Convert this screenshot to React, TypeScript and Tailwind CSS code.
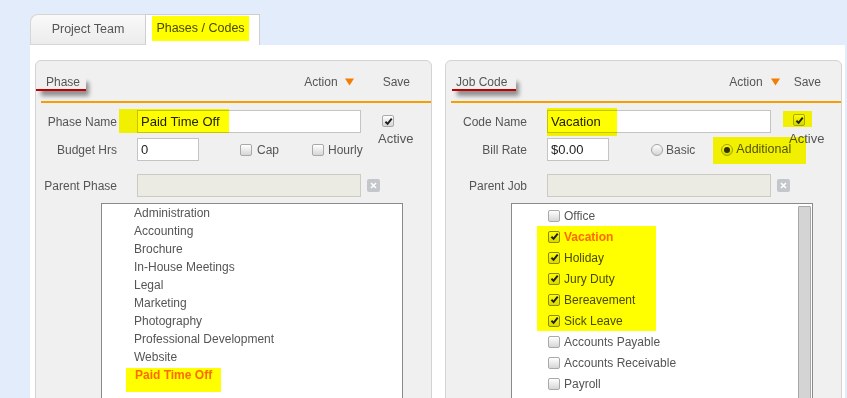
import React from "react";

function Box({ checked, hl }: { checked?: boolean; hl?: boolean }) {
  return (
    <span
      className={
        hl
          ? "inline-flex h-[12px] w-[12px] shrink-0 items-center justify-center rounded-[2px] border border-[#8a8a00] bg-gradient-to-b from-[#ffff00] to-[#d8d800]"
          : "inline-flex h-[12px] w-[12px] shrink-0 items-center justify-center rounded-[2px] border border-[#a9a9a9] bg-gradient-to-b from-white to-[#d6d6d6]"
      }
    >
      {checked && (
        <svg viewBox="0 0 10 10" className="h-[9px] w-[9px]">
          <path d="M1.6 5.3 L4 7.7 L8.6 1.9" stroke="#1e1e1e" strokeWidth="2.1" fill="none" />
        </svg>
      )}
    </span>
  );
}

function Radio({ checked }: { checked?: boolean }) {
  return (
    <span className="inline-flex h-[12px] w-[12px] shrink-0 items-center justify-center rounded-full border border-[#a3a3a3] bg-gradient-to-b from-white to-[#d4d4d4]">
      {checked && <span className="h-[6px] w-[6px] rounded-full bg-[#333]" />}
    </span>
  );
}

function Triangle() {
  return (
    <svg width="9" height="8" viewBox="0 0 9 8">
      <path d="M0 0.5 H9 L4.5 7.5 Z" fill="#f47c00" />
    </svg>
  );
}

function XBtn() {
  return (
    <span className="ml-[6px] inline-flex h-[13px] w-[13px] shrink-0 items-center justify-center rounded-[2px] bg-[#c3c7cb]">
      <svg width="7" height="7" viewBox="0 0 7 7">
        <path d="M1 1 L6 6 M6 1 L1 6" stroke="white" strokeWidth="1.6" />
      </svg>
    </span>
  );
}

function Label({ children }: { children: React.ReactNode }) {
  return (
    <span className="w-[81px] shrink-0 whitespace-nowrap text-right text-[12px] leading-[14px] text-[#555]">
      {children}
    </span>
  );
}

const inputCls =
  "ml-[20px] flex h-[23px] shrink-0 items-center border border-[#c4c4c4] bg-white pl-[3px] text-[13px] leading-[16px] text-[#222]";

const phases = [
  "Administration",
  "Accounting",
  "Brochure",
  "In-House Meetings",
  "Legal",
  "Marketing",
  "Photography",
  "Professional Development",
  "Website",
];

function LeftPanel() {
  return (
    <div className="h-[360px] w-[397px] shrink-0 rounded-t-[6px] border border-[#d3d3d3] bg-[#f0f0f0]">
      <div className="flex h-[40px] items-start">
        <span className="mt-[14px] border-b-2 border-[#c00000] pl-[10px] pr-[6px] text-[12px] leading-[14px] text-[#555] shadow-[4px_6px_4px_-1px_rgba(0,0,0,0.4)]">
          Phase
        </span>
        <div className="ml-auto mr-[21px] mt-[14px] flex items-center text-[12px] leading-[14px] text-[#555]">
          <span>Action</span>
          <span className="ml-[7px]"><Triangle /></span>
          <span className="ml-[29px]">Save</span>
        </div>
      </div>
      <div className="ml-[5px] h-[2px] bg-[#f5a000]" />

      <div className="mt-[7px] flex">
        <div className="w-[325px] shrink-0">
          <div className="relative flex h-[23px] items-center">
            <Label>Phase Name</Label>
            <div className={`${inputCls} w-[224px]`}>Paid Time Off</div>
            <div className="pointer-events-none absolute left-[83px] top-[-1px] h-[24px] w-[110px] bg-[#ffff00] mix-blend-multiply" />
          </div>
          <div className="mt-[5px] flex h-[23px] items-center whitespace-nowrap">
            <Label>Budget Hrs</Label>
            <div className={`${inputCls} w-[62px]`}>0</div>
            <span className="ml-[41px] flex shrink-0"><Box /></span>
            <span className="ml-[5px] shrink-0 text-[12px] text-[#555]">Cap</span>
            <span className="ml-[33px] flex shrink-0"><Box /></span>
            <span className="ml-[4px] shrink-0 text-[12px] text-[#555]">Hourly</span>
          </div>
        </div>
        <div className="ml-[17px] flex flex-col">
          <span className="ml-[4px] mt-[5px] flex"><Box checked /></span>
          <span className="mt-[4px] text-[13px] leading-[16px] text-[#555]">Active</span>
        </div>
      </div>

      <div className="mt-[13px] flex h-[23px] items-center">
        <Label>Parent Phase</Label>
        <div className="ml-[20px] h-[23px] w-[224px] shrink-0 border border-[#cbcbc4] bg-[#ebebe4]" />
        <XBtn />
      </div>

      <div className="ml-[65px] mt-[6px] h-[200px] w-[302px] border border-[#8a8a8a] bg-white">
        {phases.map((p) => (
          <div key={p} className="h-[18px] pl-[32px] text-[12px] leading-[18px] text-[#555]">
            {p}
          </div>
        ))}
        <div className="ml-[24px] mt-[2px] h-[24px] w-[95px] bg-[#ffff00] pl-[9px] text-[12px] font-bold leading-[14px] text-[#ff6a00]">
          Paid Time Off
        </div>
      </div>
    </div>
  );
}

const codesTop = ["Office"];
const codesHl = ["Vacation", "Holiday", "Jury Duty", "Bereavement", "Sick Leave"];
const codesBottom = ["Accounts Payable", "Accounts Receivable", "Payroll"];

function RightPanel() {
  return (
    <div className="h-[360px] w-[397px] shrink-0 rounded-t-[6px] border border-[#d3d3d3] bg-[#f0f0f0]">
      <div className="flex h-[40px] items-start">
        <span className="ml-[6px] mt-[14px] border-b-2 border-[#c00000] pl-[4px] pr-[9px] text-[12px] leading-[14px] text-[#555] shadow-[4px_6px_4px_-1px_rgba(0,0,0,0.4)]">
          Job Code
        </span>
        <div className="ml-auto mr-[20px] mt-[14px] flex items-center text-[12px] leading-[14px] text-[#555]">
          <span>Action</span>
          <span className="ml-[8px]"><Triangle /></span>
          <span className="ml-[14px]">Save</span>
        </div>
      </div>
      <div className="ml-[5px] h-[2px] bg-[#f5a000]" />

      <div className="mt-[7px] flex">
        <div className="w-[325px] shrink-0">
          <div className="relative flex h-[23px] items-center">
            <Label>Code Name</Label>
            <div className={`${inputCls} w-[224px]`}>Vacation</div>
            <div className="pointer-events-none absolute left-[101px] top-[-2px] h-[28px] w-[70px] bg-[#ffff00] mix-blend-multiply" />
          </div>
          <div className="relative mt-[5px] flex h-[23px] items-center whitespace-nowrap">
            <Label>Bill Rate</Label>
            <div className={`${inputCls} w-[62px]`}>$0.00</div>
            <span className="ml-[42px] flex shrink-0"><Radio /></span>
            <span className="ml-[3px] shrink-0 text-[12px] text-[#555]">Basic</span>
            <span className="ml-[26px] flex shrink-0"><Radio checked /></span>
            <span className="ml-[3px] shrink-0 text-[12.5px] text-[#555]">Additional</span>
            <div className="pointer-events-none absolute left-[267px] top-[-1px] h-[27px] w-[93px] bg-[#ffff00] mix-blend-multiply" />
          </div>
        </div>
        <div className="ml-[18px] flex flex-col">
          <span className="relative ml-[4px] mt-[4px] flex">
            <Box checked />
            <span className="pointer-events-none absolute left-[-10px] top-[-3px] h-[16px] w-[29px] bg-[#ffff00] mix-blend-multiply" />
          </span>
          <span className="mt-[5px] text-[13px] leading-[16px] text-[#555]">Active</span>
        </div>
      </div>

      <div className="mt-[13px] flex h-[23px] items-center">
        <Label>Parent Job</Label>
        <div className="ml-[20px] h-[23px] w-[224px] shrink-0 border border-[#cbcbc4] bg-[#ebebe4]" />
        <XBtn />
      </div>

      <div className="ml-[65px] mt-[6px] flex h-[200px] w-[302px] border border-[#8a8a8a] bg-white">
        <div className="flex-1 pt-[1px]">
          {codesTop.map((c) => (
            <div key={c} className="flex h-[21px] items-center pl-[36px] text-[12px] text-[#555]">
              <Box />
              <span className="ml-[4px]">{c}</span>
            </div>
          ))}
          <div className="ml-[25px] w-[119px] bg-[#ffff00]">
            {codesHl.map((c, i) => (
              <div key={c} className="flex h-[21px] items-center pl-[11px] text-[12px]">
                <Box checked hl />
                <span className={i === 0 ? "ml-[4px] font-bold text-[#ff6a00]" : "ml-[4px] text-[#4a4a00]"}>{c}</span>
              </div>
            ))}
          </div>
          {codesBottom.map((c) => (
            <div key={c} className="flex h-[21px] items-center pl-[36px] text-[12px] text-[#555]">
              <Box />
              <span className="ml-[4px]">{c}</span>
            </div>
          ))}
          <div className="flex h-[21px] items-center pl-[36px]">
            <Box />
          </div>
        </div>
        <div className="mr-[1px] mt-[2px] w-[13px] rounded-[1px] border border-[#a8a8a8] bg-[#d4d4d4]" />
      </div>
    </div>
  );
}

export default function App() {
  return (
    <div className="h-[398px] w-[847px] overflow-hidden bg-[#e3ecfb] pl-[30px] pt-[14px] font-['Liberation_Sans',Arial,sans-serif]">
      <div className="flex h-[31px]">
        <div className="flex w-[115px] items-center justify-center rounded-tl-[8px] border-b border-l border-t border-[#d6d6d6] bg-gradient-to-b from-[#f9f9f9] to-[#ececec] text-[12.5px] text-[#555]">
          Project Team
        </div>
        <div className="flex w-[115px] items-start border-l border-r border-t border-[#cfcfcf] bg-white pl-[6px] pt-[1px]">
          <span className="flex h-[25px] w-[97px] items-center justify-center bg-[#ffff00] text-[12.5px] text-[#4a4a00]">
            Phases / Codes
          </span>
        </div>
      </div>
      <div className="flex h-[360px] w-[815px] gap-[13px] bg-white pl-[5px] pt-[15px]">
        <LeftPanel />
        <RightPanel />
      </div>
    </div>
  );
}
